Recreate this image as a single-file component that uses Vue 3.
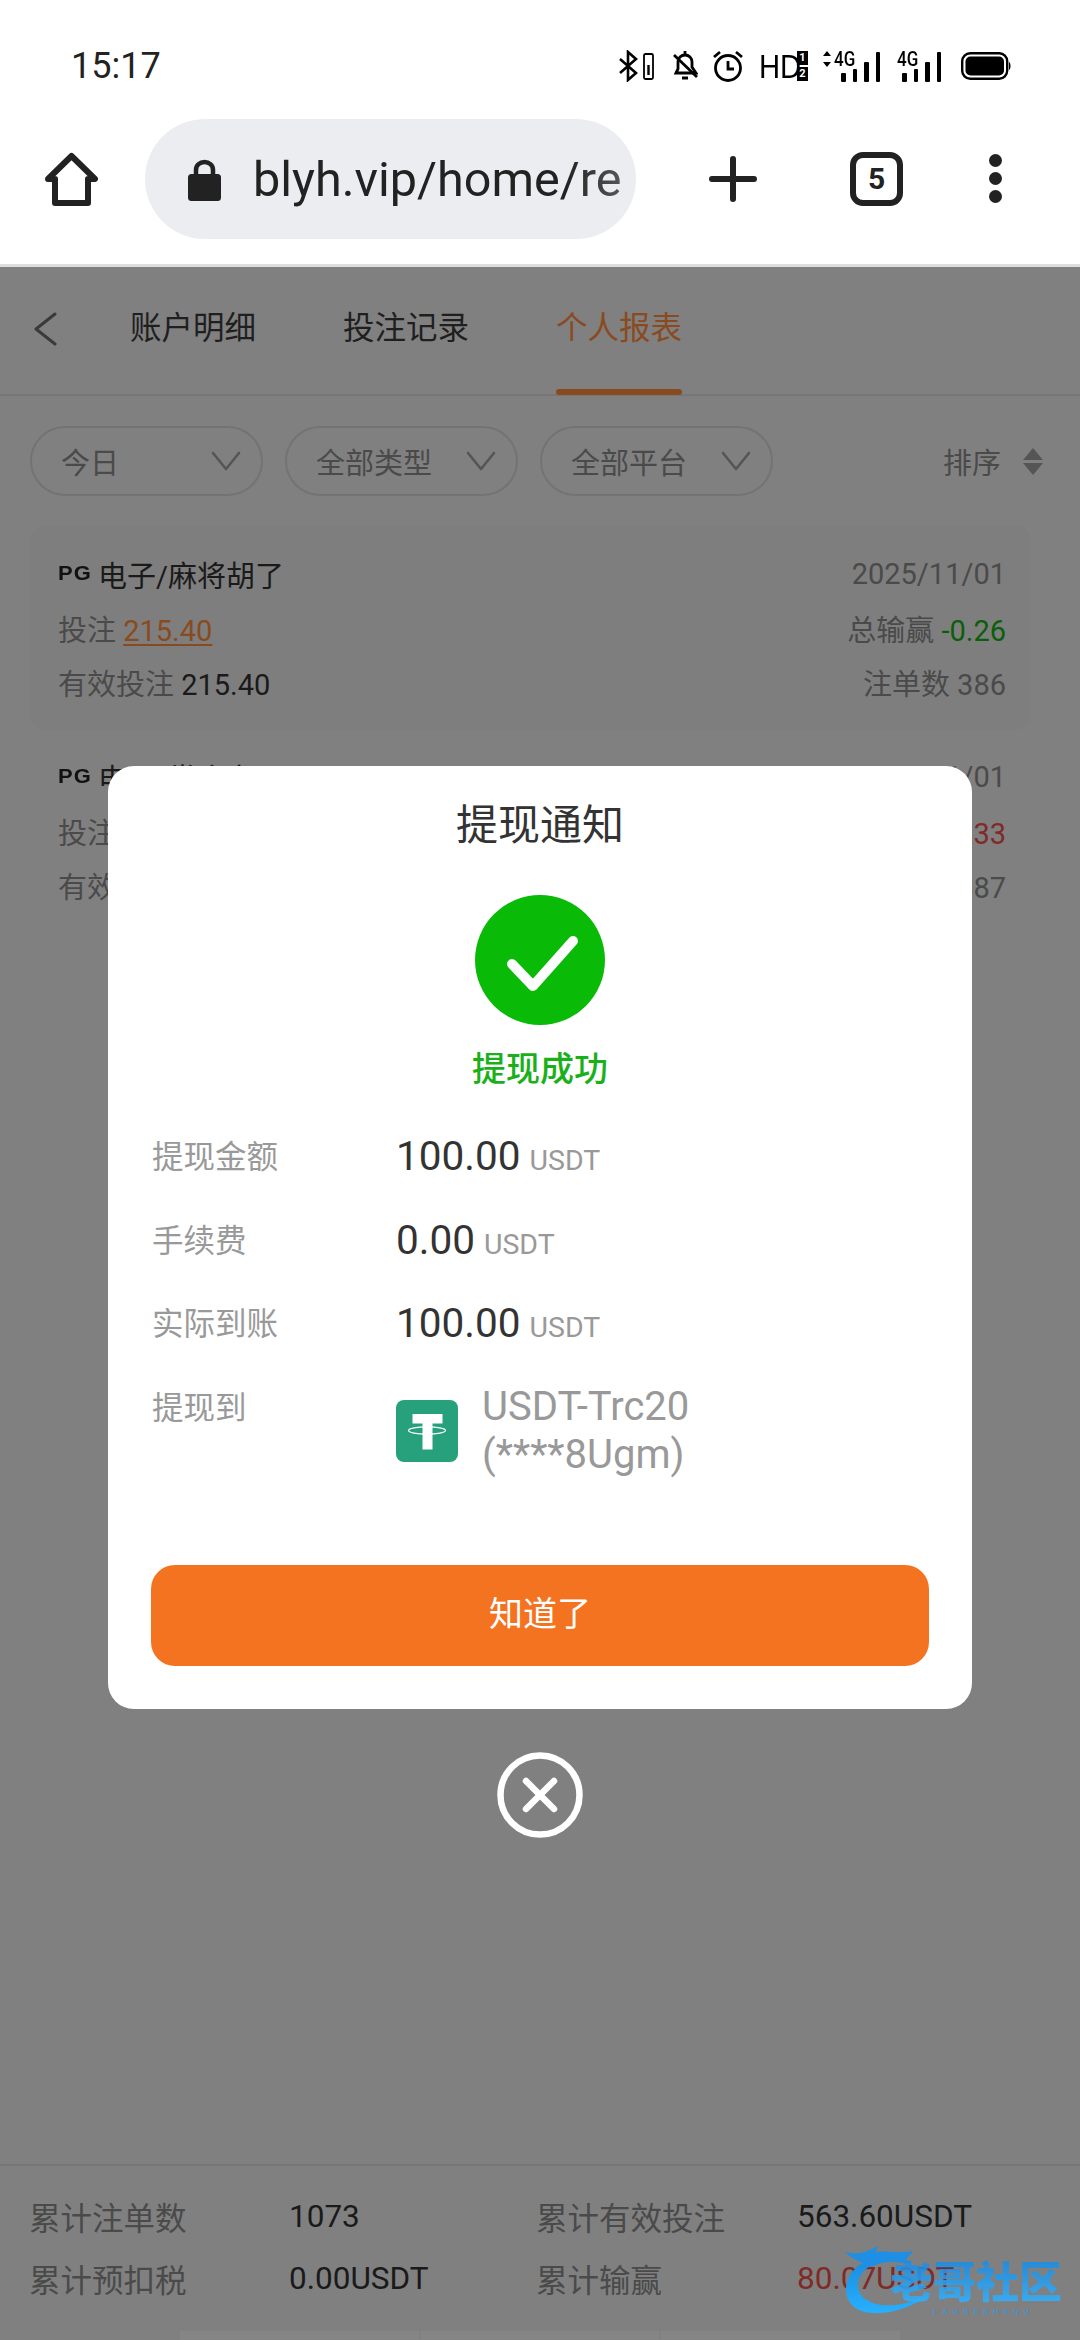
<template>
  <div class="screen">
    <div class="status">
      <span class="time">15:17</span>
      <div class="status-icons">
        <svg class="ic" width="36" height="32" viewBox="0 0 36 32" fill="none" stroke="#000" stroke-width="2.6">
          <path d="M1 9 L17 23 L9 30 V2 L17 9 L1 23" />
          <rect x="25" y="4" width="9" height="25" rx="1.5" stroke-width="1.8" />
          <rect x="28.3" y="15" width="2.4" height="10" fill="#000" stroke="none" />
        </svg>
        <svg class="ic bell" width="26" height="32" viewBox="0 0 26 32" fill="none" stroke="#000" stroke-width="2.8">
          <path d="M4 23 L6 19 V12 C6 8 9 5 13 5 C17 5 20 8 20 12 V17 L24 23 Z" />
          <path d="M13 1 V5 M10 28 H16" />
          <path d="M2 5 L25 27" />
        </svg>
        <svg class="ic clock" width="30" height="32" viewBox="0 0 30 32" fill="none" stroke="#000" stroke-width="2.8">
          <circle cx="15" cy="18" r="12.5" />
          <path d="M15 11 V19 H21" />
          <path d="M1 7 L7 2 M29 7 L23 2" />
        </svg>
        <span class="hd">HD</span>
        <div class="sim"><i>1</i><i>2</i></div>
        <div class="signal first">
          <svg class="arrows" width="10" height="16" viewBox="0 0 10 16" fill="#000"><path d="M5 0 L9 5 H1 Z M5 16 L1 11 H9 Z" /></svg>
          <span class="g">4G</span>
          <div class="bars"><b class="b1"></b><b class="b2"></b><b class="b3"></b><b class="b4"></b></div>
        </div>
        <div class="signal second">
          <span class="g">4G</span>
          <div class="bars"><b class="b1"></b><b class="b2"></b><b class="b3"></b><b class="b4"></b></div>
        </div>
        <svg class="ic battery" width="50" height="28" viewBox="0 0 50 28">
          <rect x="1.2" y="1.2" width="45" height="25.6" rx="8" fill="none" stroke="#000" stroke-width="2.4" />
          <rect x="4.5" y="4.5" width="38.5" height="19" rx="5" fill="#000" />
          <path d="M48 10 C50 11 50 17 48 18 Z" fill="#000" />
        </svg>
      </div>
    </div>

    <div class="browser">
      <svg class="home" width="53" height="54" viewBox="0 0 53 54" fill="none" stroke="#222" stroke-width="6" stroke-linejoin="round">
        <path d="M26.5 4 L50 27 H43 V51 H10 V27 H3 Z" />
      </svg>
      <div class="url">
        <svg width="35" height="42" viewBox="0 0 35 42">
          <path d="M9 18 V11 C9 6 13 3 17.5 3 C22 3 26 6 26 11 V18" fill="none" stroke="#222" stroke-width="4.5" />
          <rect x="1" y="15" width="33" height="27" rx="3.5" fill="#222" />
        </svg>
        <div class="url-text">blyh.vip/home/re</div>
      </div>
      <svg class="plus" width="48" height="46" viewBox="0 0 48 46" stroke="#222" stroke-width="6" stroke-linecap="round">
        <path d="M24 3 V43 M3 23 H45" />
      </svg>
      <div class="tab-count">5</div>
      <div class="dots"><i></i><i></i><i></i></div>
    </div>

    <div class="page">
      <div class="tabs">
        <svg class="back" width="26" height="34" viewBox="0 0 26 34" fill="none" stroke="#3a3a3a" stroke-width="3" stroke-linecap="round" stroke-linejoin="round">
          <path d="M23 2 L4 17 L23 32" />
        </svg>
        <div v-for="t in tabs" :key="t" class="tab" :class="{ active: t === '个人报表' }">{{ t }}</div>
      </div>

      <div class="filters">
        <div v-for="f in filters" :key="f" class="pill">
          <span>{{ f }}</span>
          <svg width="30" height="20" viewBox="0 0 30 20" fill="none" stroke="#555" stroke-width="2.6" stroke-linecap="round" stroke-linejoin="round">
            <path d="M2 2 L15 18 L28 2" />
          </svg>
        </div>
        <div class="sort">
          <span>排序</span>
          <div class="carets"><i class="up"></i><i class="down"></i></div>
        </div>
      </div>

      <div v-for="(c, i) in cards" :key="i" class="card" :class="{ shaded: i === 0 }">
        <div class="row">
          <span class="game"><em class="pg">PG</em>{{ c.game }}</span>
          <span>{{ c.date }}</span>
        </div>
        <div class="row">
          <span>投注 <u class="bet">{{ c.bet }}</u></span>
          <span>总输赢 <span :class="c.win < 0 ? 'lose' : 'gain'">{{ c.win }}</span></span>
        </div>
        <div class="row">
          <span>有效投注 <span class="dark">{{ c.bet }}</span></span>
          <span>注单数 {{ c.count }}</span>
        </div>
      </div>

      <div class="totals">
        <div class="totals-grid">
          <span>累计注单数</span><span class="dark">1073</span>
          <span>累计有效投注</span><span class="dark">563.60USDT</span>
          <span>累计预扣税</span><span class="dark">0.00USDT</span>
          <span>累计输赢</span><span class="red">80.07USDT</span>
        </div>
        <div class="strip"><i></i><i></i><i></i></div>
      </div>

      <div class="mask">
        <div class="modal">
          <div class="modal-title">提现通知</div>
          <svg class="ok" width="130" height="130" viewBox="0 0 130 130">
            <circle cx="65" cy="65" r="65" fill="#09bb07" />
            <path d="M37 69 L58 91 L98 46" fill="none" stroke="#fff" stroke-width="10" stroke-linecap="round" stroke-linejoin="round" />
          </svg>
          <div class="ok-text">提现成功</div>
          <div class="detail">
            <div v-for="d in details" :key="d.label" class="detail-row">
              <span class="detail-label">{{ d.label }}</span>
              <div class="money">
                <span class="amount">{{ d.value }}</span>
                <span class="unit">USDT</span>
              </div>
            </div>
            <div class="detail-row target">
              <span class="detail-label">提现到</span>
              <svg class="tether" width="62" height="62" viewBox="0 0 62 62">
                <rect width="62" height="62" rx="8" fill="#26a17b" />
                <path d="M16.5 14 H46.5 V23.5 H36.5 V49.5 H26.5 V23.5 H16.5 Z" fill="#fff" />
                <ellipse cx="31" cy="30.5" rx="18.5" ry="3.6" fill="none" stroke="#fff" stroke-width="1.2" />
              </svg>
              <span class="wallet">USDT-Trc20<br />(****8Ugm)</span>
            </div>
          </div>
          <div class="confirm">知道了</div>
        </div>
        <svg class="close" width="86" height="86" viewBox="0 0 86 86" fill="none" stroke="#fff" stroke-linecap="round">
          <circle cx="43" cy="43" r="39.5" stroke-width="6.5" />
          <path d="M29 29 L57 57 M57 29 L29 57" stroke-width="6.5" />
        </svg>
      </div>

      <div class="watermark">
        <svg width="110" height="80" viewBox="0 0 110 80" fill="none">
          <defs>
            <linearGradient id="wm" x1="0" y1="0" x2="0" y2="1">
              <stop offset="0" stop-color="#1b8fe0" />
              <stop offset="1" stop-color="#28b0ff" />
            </linearGradient>
          </defs>
          <path d="M17 20 C2 32 -2 50 10 62 C22 74 60 72 90 48 C62 64 32 66 19 52 C11 42 15 30 27 22 Z" fill="url(#wm)" />
          <path d="M2 8 C12 10 20 10 26 6 L36 2 L32 8 C44 6 56 10 70 7 C68 12 60 14 64 20 C50 16 40 18 30 22 C24 24 20 22 18 18 C12 16 6 12 2 8 Z" fill="#1e8fe4" />
        </svg>
        <div class="wm-name">老哥社区</div>
        <div class="wm-sub">LAOGESHEQU</div>
      </div>
    </div>
  </div>
</template>

<script setup>
const tabs = ['账户明细', '投注记录', '个人报表']
const filters = ['今日', '全部类型', '全部平台']

const cards = [
  { game: '电子/麻将胡了', date: '2025/11/01', bet: '215.40', win: -0.26, count: 386 },
  { game: '电子/赏金女王', date: '2025/11/01', bet: '348.20', win: 80.33, count: 687 }
]

const details = [
  { label: '提现金额', value: '100.00' },
  { label: '手续费', value: '0.00' },
  { label: '实际到账', value: '100.00' }
]
</script>

<style>
body {
  margin: 0;
  background: #fff;
}
</style>

<style scoped>
.screen {
  position: relative;
  display: flex;
  flex-direction: column;
  width: 1080px;
  height: 2340px;
  overflow: hidden;
  font-family: Roboto, "Noto Sans CJK SC", sans-serif;
  color: #222;
}

/* status bar */
.status {
  display: flex;
  align-items: center;
  justify-content: space-between;
  height: 120px;
  box-sizing: border-box;
  padding: 12px 69px 0 71px;
}
.time {
  font-size: 36px;
}
.status-icons {
  display: flex;
  align-items: center;
  color: #000;
}
.ic {
  display: block;
  flex: none;
}
.bell {
  margin-left: 17px;
}
.clock {
  margin-left: 15px;
}
.hd {
  margin-left: 16px;
  font-size: 34px;
  line-height: 32px;
  font-family: "Liberation Sans", sans-serif;
  transform: scaleX(0.86);
  transform-origin: left center;
  width: 38px;
}
.sim {
  display: flex;
  flex-direction: column;
  gap: 2px;
  width: 11px;
}
.sim i {
  height: 14px;
  background: #000;
  color: #fff;
  font-style: normal;
  font-weight: 700;
  font-size: 11px;
  line-height: 14px;
  text-align: center;
}
.signal {
  position: relative;
  height: 32px;
  width: 58px;
}
.signal.first {
  margin-left: 14px;
}
.signal.second {
  margin-left: 17px;
  width: 44px;
}
.arrows {
  position: absolute;
  left: 0;
  top: 1px;
}
.g {
  position: absolute;
  top: -1px;
  font-size: 20px;
  line-height: 20px;
  font-weight: 500;
  transform: scaleX(0.85);
  transform-origin: left top;
}
.first .g {
  left: 12px;
}
.second .g {
  left: 0;
}
.bars {
  position: absolute;
  bottom: 0;
  right: 0;
  display: flex;
  align-items: flex-end;
  gap: 7px;
}
.bars b {
  width: 4.5px;
  border-radius: 1px;
  background: #000;
}
.b1 {
  height: 9px;
}
.b2 {
  height: 13px;
}
.b3 {
  height: 20px;
}
.b4 {
  height: 30px;
}
.battery {
  margin-left: 20px;
}

/* browser bar */
.browser {
  display: flex;
  align-items: center;
  height: 147px;
  box-sizing: border-box;
  padding: 0 0 27px 45px;
  border-bottom: 3px solid #dedede;
}
.url {
  display: flex;
  align-items: center;
  gap: 31px;
  width: 491px;
  height: 120px;
  box-sizing: border-box;
  margin-left: 47px;
  padding: 2px 10px 0 42px;
  border-radius: 60px;
  background: #ebedf0;
  flex: none;
}
.url svg {
  flex: none;
}
.url-text {
  white-space: nowrap;
  font-size: 48.5px;
  color: #222;
  -webkit-mask-image: linear-gradient(to right, #000 85%, rgba(0, 0, 0, 0.75));
  mask-image: linear-gradient(to right, #000 85%, rgba(0, 0, 0, 0.75));
}
.plus {
  margin-left: 73px;
  flex: none;
}
.tab-count {
  width: 53px;
  height: 54px;
  box-sizing: border-box;
  margin-left: 93px;
  border: 6px solid #222;
  border-radius: 13px;
  text-align: center;
  font-size: 30px;
  font-weight: 700;
  line-height: 42px;
  flex: none;
}
.dots {
  display: flex;
  flex-direction: column;
  gap: 5px;
  margin-left: 86px;
}
.dots i {
  width: 13px;
  height: 13px;
  border-radius: 50%;
  background: #222;
}

/* dimmed page behind the dialog */
.page {
  position: relative;
  flex: 1;
  display: flex;
  flex-direction: column;
  background: #808080;
  color: #4a4a4a;
  font-size: 29px;
}
.tabs {
  display: flex;
  align-items: stretch;
  height: 129px;
  box-sizing: border-box;
  padding-left: 32px;
  border-bottom: 2px solid #767676;
}
.back {
  align-self: center;
  margin: -3px 72px 0 0;
}
.tab {
  position: relative;
  display: flex;
  align-items: center;
  margin-right: 87px;
  padding-bottom: 12px;
  box-sizing: border-box;
  font-size: 31.5px;
  color: #1f1f1f;
}
.tab.active {
  color: #8a4a1f;
}
.tab.active::after {
  content: "";
  position: absolute;
  left: 0;
  right: 0;
  bottom: -1px;
  height: 6px;
  border-radius: 3px;
  background: #8a4a20;
}
.filters {
  display: flex;
  align-items: center;
  gap: 22px;
  padding: 30px 37px 29px 30px;
}
.pill {
  display: flex;
  align-items: center;
  justify-content: space-between;
  width: 233px;
  height: 70px;
  box-sizing: border-box;
  padding: 0 20px 0 29px;
  border: 2px solid #737373;
  border-radius: 35px;
}
.sort {
  display: flex;
  align-items: center;
  gap: 22px;
  margin-left: auto;
}
.carets {
  display: flex;
  flex-direction: column;
  gap: 3px;
}
.carets i {
  width: 0;
  height: 0;
  border-left: 10px solid transparent;
  border-right: 10px solid transparent;
}
.carets .up {
  border-bottom: 12px solid #555;
}
.carets .down {
  border-top: 12px solid #555;
}
.card {
  margin: 0 49px 0 30px;
  height: 202px;
  box-sizing: border-box;
  padding: 23px 25px 0 28px;
  border-radius: 16px;
}
.card.shaded {
  height: 205px;
  margin-bottom: -3px;
  padding-top: 22px;
  background: #7e7e7e;
}
.row {
  display: flex;
  align-items: center;
  justify-content: space-between;
  height: 54px;
}
.game {
  display: flex;
  align-items: center;
  color: #1a1a1a;
}
.pg {
  width: 40px;
  font-style: normal;
  font-family: "Liberation Sans", sans-serif;
  font-weight: 700;
  font-size: 22px;
  letter-spacing: 1px;
  color: #111;
  transform: scaleY(0.9);
}
.bet {
  color: #8a4a20;
  text-underline-offset: 3px;
}
.lose {
  color: #0b5f0b;
}
.gain {
  color: #7f2a26;
}
.dark {
  color: #1a1a1a;
}
.red {
  color: #7f2a26;
}

/* totals */
.totals {
  margin-top: auto;
  height: 176px;
  box-sizing: border-box;
  display: flex;
  flex-direction: column;
  border-top: 2px solid #767676;
  font-size: 31.5px;
}
.totals-grid {
  flex: 1;
  display: grid;
  grid-template-columns: 260px 247px 261px 1fr;
  grid-auto-rows: 62px;
  align-items: center;
  padding: 19px 0 0 29px;
}
.strip {
  display: flex;
  gap: 2px;
  height: 9px;
  padding: 0 180px;
}
.strip i {
  flex: 1;
  background: #858585;
}

/* dialog */
.mask {
  position: absolute;
  inset: 0;
  display: flex;
  flex-direction: column;
  align-items: center;
  justify-content: center;
  padding-bottom: 4px;
  box-sizing: border-box;
}
.modal {
  width: 864px;
  height: 943px;
  box-sizing: border-box;
  padding: 29px 43px 43px;
  display: flex;
  flex-direction: column;
  align-items: center;
  border-radius: 26px;
  background: #fff;
  color: #333;
}
.modal-title {
  font-size: 42px;
  line-height: 62px;
}
.ok {
  flex: none;
  margin-top: 38px;
}
.ok-text {
  margin-top: 19px;
  font-size: 34px;
  line-height: 50px;
  font-weight: 500;
  color: #1ab01a;
}
.detail {
  align-self: stretch;
  margin-top: 20px;
}
.detail-row {
  display: flex;
  align-items: center;
  height: 83.5px;
  padding-left: 1px;
}
.detail-label {
  width: 244px;
  padding-bottom: 2px;
  font-size: 31.5px;
  color: #999;
}
.money {
  display: flex;
  align-items: baseline;
  padding-top: 2px;
}
.amount {
  font-size: 40.5px;
  color: #333;
}
.unit {
  margin-left: 9px;
  font-size: 28.5px;
  color: #999;
}
.target {
  align-items: flex-start;
  height: 116px;
}
.target .detail-label {
  padding: 3px 0 0;
  line-height: 83.5px;
}
.tether {
  flex: none;
  margin-top: 36px;
}
.wallet {
  margin: 19px 0 0 24px;
  font-size: 40px;
  line-height: 48px;
  color: #999;
}
.confirm {
  flex: none;
  align-self: stretch;
  height: 101px;
  margin-top: auto;
  border-radius: 24px;
  background: #f47321;
  color: #fff;
  font-size: 34px;
  line-height: 98px;
  text-align: center;
}
.close {
  flex: none;
  margin-top: 43px;
}

/* site watermark */
.watermark {
  position: absolute;
  left: 843px;
  top: 1977px;
  width: 230px;
  height: 90px;
  pointer-events: none;
}
.watermark svg {
  position: absolute;
  left: 0;
  top: 0;
}
.wm-name {
  position: absolute;
  left: 47px;
  top: 15px;
  font-size: 43px;
  line-height: 48px;
  font-weight: 900;
  white-space: nowrap;
  color: transparent;
  opacity: 0.88;
  background: linear-gradient(#1b8ae0, #36b4ff);
  -webkit-background-clip: text;
  background-clip: text;
}
.wm-sub {
  position: absolute;
  left: 90px;
  top: 63px;
  font-size: 8px;
  letter-spacing: 5px;
  line-height: 10px;
  color: #2a9be8;
  white-space: nowrap;
}
</style>
